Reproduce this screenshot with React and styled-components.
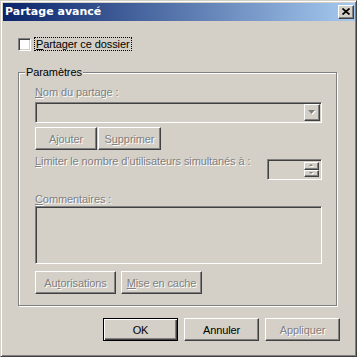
import React from "react";
import styled, { createGlobalStyle, css } from "styled-components";

const GlobalStyle = createGlobalStyle`
  html, body {
    margin: 0;
    padding: 0;
    background: #d4d0c8;
  }
  * {
    box-sizing: border-box;
  }
`;

const raised = css`
  border: 1px solid;
  border-color: #fff #404040 #404040 #fff;
  box-shadow: inset -1px -1px 0 #808080, inset 1px 1px 0 #d4d0c8;
  background: #d4d0c8;
`;

const sunken = css`
  border: 1px solid;
  border-color: #808080 #fff #fff #808080;
  box-shadow: inset 1px 1px 0 #404040, inset -1px -1px 0 #d4d0c8;
`;

const disabledText = css`
  color: #808080;
  text-shadow: 1px 1px 0 #fff;
`;

const Window = styled.div`
  width: 357px;
  height: 357px;
  display: flex;
  flex-direction: column;
  padding: 2px 1px 1px 2px;
  background: #d4d0c8;
  border: 1px solid;
  border-color: #d4d0c8 #404040 #404040 #d4d0c8;
  box-shadow: inset 1px 1px 0 #fff, inset -1px -1px 0 #808080;
  font-family: "Liberation Sans", Arial, sans-serif;
  font-size: 11px;
  letter-spacing: -0.1px;
  color: #000;
`;

const TitleBar = styled.div`
  height: 18px;
  display: flex;
  align-items: center;
  justify-content: space-between;
  padding: 0 1px 0 2px;
  background: linear-gradient(to right, #0a246a, #a6caf0);
`;

const Title = styled.span`
  color: #fff;
  font-family: "DejaVu Sans", Verdana, sans-serif;
  font-weight: bold;
  font-size: 11px;
  letter-spacing: 0;
  line-height: 18px;
`;

const CloseButton = styled.div`
  ${raised};
  width: 16px;
  height: 14px;
  display: flex;
  align-items: center;
  justify-content: center;
  padding: 0 1px 1px 0;
`;

const Body = styled.div`
  flex: 1;
  display: flex;
  flex-direction: column;
  padding: 16px 15px 0 15px;
`;

const CheckRow = styled.label`
  display: flex;
  align-items: center;
  gap: 3px;
  height: 14px;
`;

const CheckBox = styled.span`
  ${sunken};
  width: 13px;
  height: 13px;
  background: #fff;
`;

const FocusLabel = styled.span`
  border: 1px dotted #000;
  padding: 0 1px;
  line-height: 12px;
`;

const Group = styled.fieldset`
  width: 319px;
  margin: 15px 0 0 0;
  padding: 0;
  min-width: 0;
  border: 1px solid #808080;
  box-shadow: 1px 1px 0 #fff, inset 1px 1px 0 #fff;
`;

const Legend = styled.legend`
  margin-left: 6px;
  padding: 0 1px;
  line-height: 13px;
  background: #d4d0c8;
`;

const GroupContent = styled.div`
  display: flex;
  flex-direction: column;
  padding: 7px 14px 11px 16px;
`;

const FieldLabel = styled.div`
  line-height: 13px;
  margin-top: ${(p) => p.$top || 0}px;
  ${disabledText};
`;

const Combo = styled.div`
  ${sunken};
  width: 287px;
  height: 21px;
  margin-top: 3px;
  display: flex;
  justify-content: flex-end;
  padding: 1px;
`;

const ArrowButton = styled.div`
  ${raised};
  width: 16px;
  height: 17px;
  display: flex;
  align-items: center;
  justify-content: center;
`;

const ButtonRow = styled.div`
  display: flex;
  gap: ${(p) => p.$gap}px;
  margin-top: ${(p) => p.$top}px;
  justify-content: ${(p) => (p.$end ? "flex-end" : "flex-start")};
`;

const Button = styled.div`
  ${raised};
  width: ${(p) => p.$w}px;
  height: 23px;
  display: flex;
  align-items: center;
  justify-content: center;
  ${(p) => (p.$disabled ? disabledText : "")};
  ${(p) =>
    p.$default &&
    css`
      border: 1px solid #000;
      box-shadow: inset 1px 1px 0 #fff, inset -1px -1px 0 #404040,
        inset -2px -2px 0 #808080;
    `}
`;

const LimitRow = styled.div`
  display: flex;
  justify-content: space-between;
  align-items: flex-start;
  margin-top: 5px;
`;

const Spinner = styled.div`
  ${sunken};
  width: 55px;
  height: 21px;
  margin-top: 4px;
  display: flex;
  justify-content: flex-end;
  padding: 2px;
`;

const SpinButtons = styled.div`
  width: 15px;
  display: flex;
  flex-direction: column;
`;

const SpinButton = styled.div`
  ${raised};
  flex: 1;
  display: flex;
  align-items: center;
  justify-content: center;
`;

const Comments = styled.div`
  ${sunken};
  width: 287px;
  height: 58px;
  background: #d4d0c8;
`;

const Arrow = ({ up, w = 7, h = 4 }) => (
  <svg width={w + 1} height={h + 1} viewBox={`0 0 ${w + 1} ${h + 1}`}>
    <polygon
      points={up ? `1,${h + 1} ${w + 1},${h + 1} ${(w + 2) / 2},1` : `1,1 ${w + 1},1 ${(w + 2) / 2},${h + 1}`}
      fill="#fff"
    />
    <polygon
      points={up ? `0,${h} ${w},${h} ${w / 2},0` : `0,0 ${w},0 ${w / 2},${h}`}
      fill="#808080"
    />
  </svg>
);

export default function App() {
  return (
    <>
      <GlobalStyle />
      <Window>
        <TitleBar>
          <Title>Partage avancé</Title>
          <CloseButton>
            <svg width="8" height="7" viewBox="0 0 8 7">
              <path d="M0.5 0.5L7.5 6.5M7.5 0.5L0.5 6.5" stroke="#000" strokeWidth="1.7" />
            </svg>
          </CloseButton>
        </TitleBar>
        <Body>
          <CheckRow>
            <CheckBox />
            <FocusLabel>
              <u>P</u>artager ce dossier
            </FocusLabel>
          </CheckRow>
          <Group>
            <Legend>Paramètres</Legend>
            <GroupContent>
              <FieldLabel>
                <u>N</u>om du partage :
              </FieldLabel>
              <Combo>
                <ArrowButton>
                  <Arrow />
                </ArrowButton>
              </Combo>
              <ButtonRow $gap={1} $top={4}>
                <Button $w={62} $disabled>
                  A<u>j</u>outer
                </Button>
                <Button $w={63} $disabled>
                  S<u>u</u>pprimer
                </Button>
              </ButtonRow>
              <LimitRow>
                <FieldLabel>
                  <u>L</u>imiter le nombre d’utilisateurs simultanés à :
                </FieldLabel>
                <Spinner>
                  <SpinButtons>
                    <SpinButton>
                      <Arrow up w={4} h={2} />
                    </SpinButton>
                    <SpinButton>
                      <Arrow w={4} h={2} />
                    </SpinButton>
                  </SpinButtons>
                </Spinner>
              </LimitRow>
              <FieldLabel $top={13}>
                <u>C</u>ommentaires :
              </FieldLabel>
              <Comments />
              <ButtonRow $gap={5} $top={7}>
                <Button $w={81} $disabled>
                  Au<u>t</u>orisations
                </Button>
                <Button $w={81} $disabled>
                  <u>M</u>ise en cache
                </Button>
              </ButtonRow>
            </GroupContent>
          </Group>
          <ButtonRow $gap={6} $top={12} $end>
            <Button $w={75} $default>
              OK
            </Button>
            <Button $w={75}>Annuler</Button>
            <Button $w={75} $disabled>
              Appliquer
            </Button>
          </ButtonRow>
        </Body>
      </Window>
    </>
  );
}
